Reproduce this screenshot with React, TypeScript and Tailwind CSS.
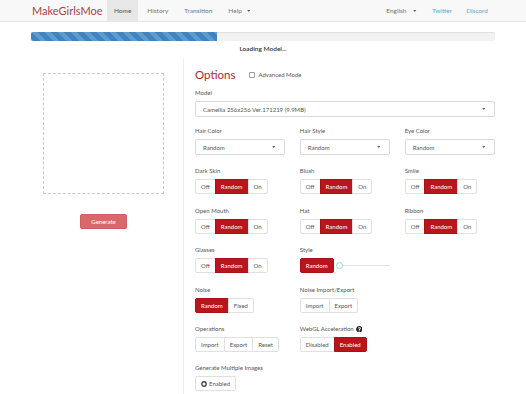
import React from 'react';
import { FaQuestionCircle } from 'react-icons/fa';

const Caret = () => (
  <svg width="3.5" height="2" viewBox="0 0 4 2.5" className="shrink-0">
    <path d="M0 0h4L2 2.5z" fill="#666" />
  </svg>
);

const Label = ({ children }: { children: React.ReactNode }) => (
  <div className="h-[8px] leading-[8px] mb-[4px] text-[6px] text-[#555] flex items-center gap-[2px]">{children}</div>
);

const Select = ({ value }: { value: string }) => (
  <div className="h-[16px] border border-[#d9d9d9] rounded-[2px] bg-white flex items-center justify-between pl-[7px] pr-[9px] text-[6px] text-[#555]">
    <span>{value}</span>
    <Caret />
  </div>
);

type Btn = { text: string; active?: boolean; icon?: React.ReactNode };

const Group = ({ items }: { items: Btn[] }) => (
  <div className="flex h-[15px]">
    {items.map((b, i) => (
      <div
        key={b.text}
        className={
          'flex items-center gap-[2px] px-[5px] text-[6px] border ' +
          (b.active ? 'bg-[#b8161c] border-[#a51218] text-white' : 'bg-white border-[#e0e0e0] text-[#555]') +
          (i > 0 ? ' -ml-px' : '') +
          (i === 0 ? ' rounded-l-[2px]' : '') +
          (i === items.length - 1 ? ' rounded-r-[2px]' : '')
        }
      >
        {b.icon}
        {b.text}
      </div>
    ))}
  </div>
);

const tri = (active = 'Random'): Btn[] => [
  { text: 'Off', active: active === 'Off' },
  { text: 'Random', active: active === 'Random' },
  { text: 'On', active: active === 'On' },
];

const Field = ({ label, children }: { label: React.ReactNode; children: React.ReactNode }) => (
  <div>
    <Label>{label}</Label>
    {children}
  </div>
);

const App = () => {
  return (
    <div className="min-h-screen bg-white font-['Lato','Open_Sans',sans-serif]">
      {/* navbar */}
      <nav className="h-[22px] bg-[#f8f8f8] border-b border-[#e7e7e7]">
        <div className="w-[464px] mx-auto h-full flex items-center">
          <div className="w-[76px] text-[11px] leading-none text-[#a9434a] pl-px">MakeGirlsMoe</div>
          <div className="flex h-full text-[6.5px] text-[#777]">
            <div className="px-[7px] flex items-center bg-[#e7e7e7] text-[#555]">Home</div>
            <div className="px-[7px] ml-[2px] flex items-center">History</div>
            <div className="px-[7px] ml-[2px] flex items-center">Transition</div>
            <div className="px-[7px] ml-[2px] flex items-center gap-[5px]">Help <Caret /></div>
          </div>
          <div className="ml-auto flex h-full text-[6.5px] items-center">
            <div className="flex items-center gap-[7px] text-[#777]">English <Caret /></div>
            <div className="ml-[15px] text-[#5aa7d8]">Twitter</div>
            <div className="ml-[14px] mr-[7px] text-[#6aa6cf]">Discord</div>
          </div>
        </div>
      </nav>

      <main className="w-[464px] mx-auto">
        {/* progress */}
        <div className="mt-[10px] h-[9px] rounded-[2px] bg-[#f2f2f2] shadow-[inset_0_1px_1px_rgba(0,0,0,0.08)] overflow-hidden">
          <div className="h-full w-[40%] bg-[#3f84bf] bg-[linear-gradient(45deg,rgba(255,255,255,.18)_25%,transparent_25%,transparent_50%,rgba(255,255,255,.18)_50%,rgba(255,255,255,.18)_75%,transparent_75%,transparent)] bg-[length:13px_13px]" />
        </div>
        <div className="h-[16px] flex items-center justify-center text-[6.5px] font-semibold text-[#333]">Loading Model...</div>

        <div className="flex mt-[2px]">
          {/* left */}
          <div className="w-[145px] flex flex-col items-center pt-[14px]">
            <div className="w-[121px] h-[121px] border border-dashed border-[#c8c8c8]" />
            <div className="mt-[20px] w-[47px] h-[15px] rounded-[2px] bg-[#d8686c] border border-[#cf5d61] text-white text-[6px] flex items-center justify-center">
              Generate
            </div>
          </div>

          {/* right */}
          <div className="ml-[7px] border-l border-[#eee] pl-[11px] flex-1 min-h-[340px]">
            <div className="h-[30px] flex items-center pt-[1px]">
              <span className="text-[11.5px] text-[#b0272d]">Options</span>
              <span className="ml-[14px] flex items-center gap-[3px] text-[6px] text-[#555]">
                <span className="w-[6px] h-[6px] border border-[#999] rounded-[1px]" />
                Advanced Mode
              </span>
            </div>

            <Field label="Model">
              <Select value="Camellia 256x256 Ver.171219 (9.9MB)" />
            </Field>

            <div className="grid grid-cols-3 gap-x-[14.5px] gap-y-[12.4px] mt-[10px]">
              <Field label="Hair Color"><Select value="Random" /></Field>
              <Field label="Hair Style"><Select value="Random" /></Field>
              <Field label="Eye Color"><Select value="Random" /></Field>

              <Field label="Dark Skin"><Group items={tri()} /></Field>
              <Field label="Blush"><Group items={tri()} /></Field>
              <Field label="Smile"><Group items={tri()} /></Field>

              <Field label="Open Mouth"><Group items={tri()} /></Field>
              <Field label="Hat"><Group items={tri()} /></Field>
              <Field label="Ribbon"><Group items={tri()} /></Field>

              <Field label="Glasses"><Group items={tri()} /></Field>
              <Field label="Style">
                <div className="flex items-center h-[15px]">
                  <Group items={[{ text: 'Random', active: true }]} />
                  <div className="relative ml-[2px] w-[57px] h-[8px] flex items-center">
                    <div className="w-full h-px bg-[#e3e3e3]" />
                    <div className="absolute left-0 w-[7px] h-[7px] rounded-full border border-[#9fd3ea] bg-white" />
                  </div>
                </div>
              </Field>
              <div />

              <Field label="Noise">
                <Group items={[{ text: 'Random', active: true }, { text: 'Fixed' }]} />
              </Field>
              <Field label="Noise Import/Export">
                <Group items={[{ text: 'Import' }, { text: 'Export' }]} />
              </Field>
              <div />

              <Field label="Operations">
                <Group items={[{ text: 'Import' }, { text: 'Export' }, { text: 'Reset' }]} />
              </Field>
              <Field label={<>WebGL Acceleration <FaQuestionCircle size={6.5} color="#222" /></>}>
                <Group items={[{ text: 'Disabled' }, { text: 'Enabled', active: true }]} />
              </Field>
              <div />

              <div className="col-span-2">
                <Field label="Generate Multiple Images">
                  <Group
                    items={[
                      {
                        text: 'Enabled',
                        icon: (
                          <svg width="6" height="6" viewBox="0 0 6 6">
                            <circle cx="3" cy="3" r="2.2" fill="none" stroke="#444" strokeWidth="1.4" />
                          </svg>
                        ),
                      },
                    ]}
                  />
                </Field>
              </div>
            </div>
          </div>
        </div>
      </main>
    </div>
  );
};

export default App;
